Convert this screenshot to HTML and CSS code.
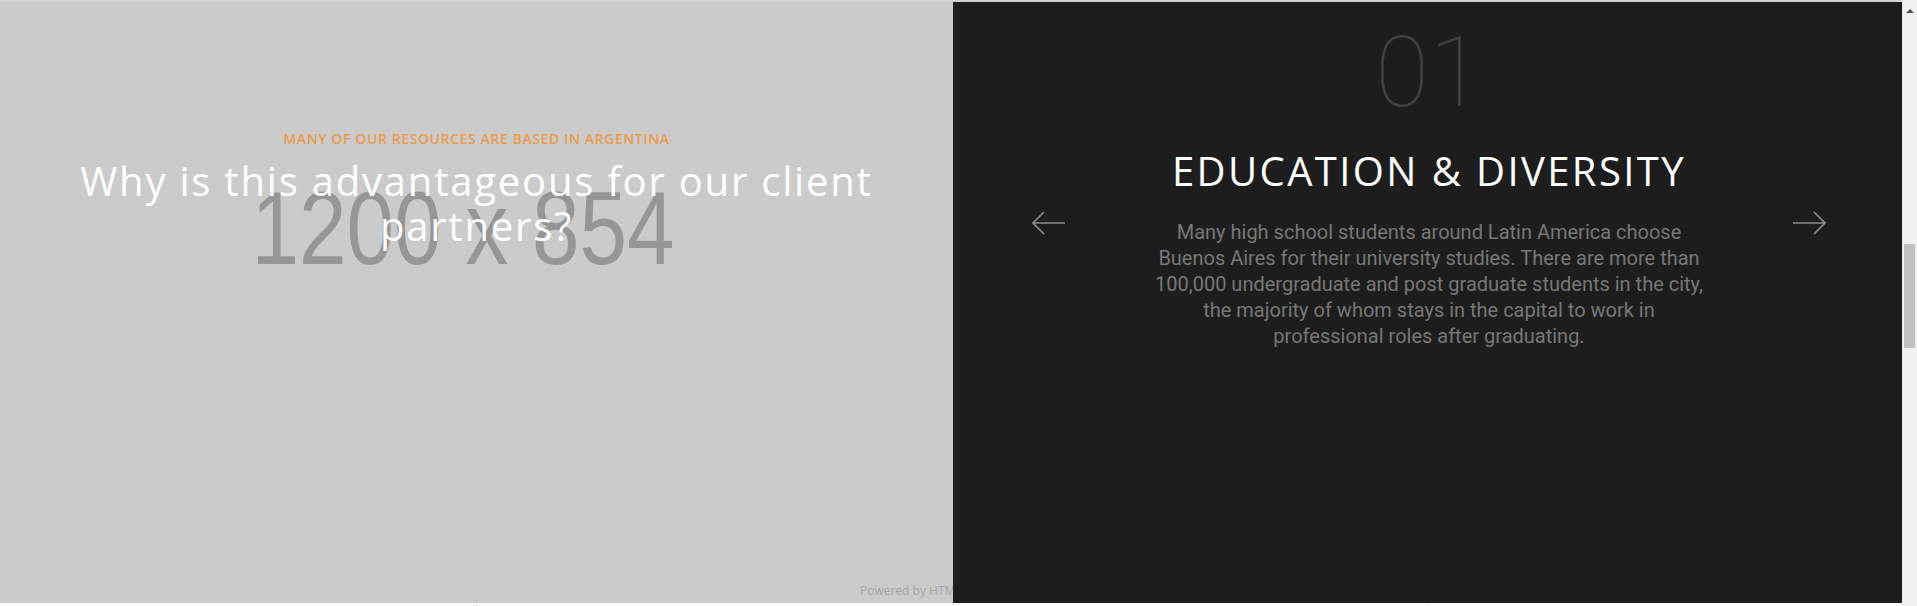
FILE: index.html
```html
<!DOCTYPE html>
<html lang="en">
<head>
<meta charset="utf-8">
<title>Why Argentina</title>
<link rel="stylesheet" href="styles.css">
</head>
<body>
<div class="page">
  <div class="main">
    <div class="topline"></div>
    <div class="panels">
      <section class="panel panel-left">
        <div class="placeholder">1200 x 854</div>
        <div class="intro">
          <p class="eyebrow">MANY OF OUR RESOURCES ARE BASED IN ARGENTINA</p>
          <h2 class="intro-title">Why is this advantageous for our client partners?</h2>
        </div>
        <div class="powered">Powered by HTML5 UP</div>
      </section>
      <section class="panel panel-right">
        <div class="slider">
          <button class="nav nav-prev" aria-label="Previous">
            <svg width="34" height="24" viewBox="0 0 34 24"><path d="M1 12 H33 M12 1 L1 12 L12 23" fill="none" stroke="#8c8c8c" stroke-width="1.6"/></svg>
          </button>
          <div class="slide">
            <div class="slide-num">01</div>
            <h3 class="slide-title">EDUCATION &amp; DIVERSITY</h3>
            <p class="slide-text">Many high school students around Latin America choose Buenos Aires for their university studies. There are more than 100,000 undergraduate and post graduate students in the city, the majority of whom stays in the capital to work in professional roles after graduating.</p>
          </div>
          <button class="nav nav-next" aria-label="Next">
            <svg width="34" height="24" viewBox="0 0 34 24"><path d="M1 12 H33 M22 1 L33 12 L22 23" fill="none" stroke="#8c8c8c" stroke-width="1.6"/></svg>
          </button>
        </div>
      </section>
    </div>
    <div class="bottomstrip">
      <span class="tick tick-left"></span>
      <span class="tick tick-right"></span>
    </div>
  </div>
  <div class="scrollbar">
    <div class="sb-up"></div>
    <div class="sb-thumb"></div>
  </div>
</div>
</body>
</html>
```
FILE: styles.css
```css
html, body {
  margin: 0;
  padding: 0;
  width: 1917px;
  height: 606px;
  overflow: hidden;
  background: #fff;
}

.page {
  display: flex;
  width: 1917px;
  height: 606px;
}

.main {
  width: 1902px;
  display: flex;
  flex-direction: column;
}

.topline {
  height: 2px;
  background: #d2d2d2;
}

.panels {
  display: flex;
  height: 601px;
}

.panel {
  position: relative;
  overflow: hidden;
}

.panel-left {
  width: 953px;
  background: #cbcbcb;
}

.panel-right {
  width: 949px;
  background: #1d1d1d;
  z-index: 1;
}

.placeholder {
  position: absolute;
  left: 0;
  top: 175px;
  width: 926px;
  text-align: center;
  font-family: "Liberation Sans", Arial, sans-serif;
  font-size: 103px;
  line-height: 1;
  color: #969696;
  transform: scaleX(0.83);
  white-space: nowrap;
}

.intro {
  position: relative;
  display: flex;
  flex-direction: column;
  align-items: center;
  padding-top: 127px;
  text-align: center;
}

.eyebrow {
  margin: 0;
  font-family: "Open Sans", "Liberation Sans", sans-serif;
  font-size: 14px;
  line-height: 20px;
  font-weight: 600;
  letter-spacing: 0.6px;
  color: #ec9b4e;
}

.intro-title {
  margin: 9px 0 0;
  max-width: 840px;
  font-family: "Open Sans", "Liberation Sans", sans-serif;
  font-weight: 400;
  font-size: 40px;
  line-height: 45px;
  letter-spacing: 1.8px;
  color: #ffffff;
}

.powered {
  position: absolute;
  left: 860px;
  top: 581px;
  font-family: "Open Sans", "Liberation Sans", sans-serif;
  font-size: 12px;
  line-height: 16px;
  color: #a5a5a5;
  white-space: nowrap;
}

.slider {
  display: flex;
  justify-content: space-between;
  align-items: flex-start;
  padding: 0 76px 0 79px;
}

.nav {
  margin-top: 209px;
  padding: 0;
  border: 0;
  background: none;
  width: 34px;
  height: 24px;
  display: block;
}

.nav svg {
  display: block;
}

.slide {
  width: 560px;
  display: flex;
  flex-direction: column;
  align-items: center;
  text-align: center;
  padding-top: 22px;
}

.slide-num {
  font-family: Roboto, "Inter", sans-serif;
  font-weight: 100;
  font-size: 98px;
  line-height: 1;
  color: #404040;
}

.slide-title {
  margin: 25px 0 0;
  font-family: "Open Sans", "Liberation Sans", sans-serif;
  font-weight: 400;
  font-size: 40px;
  line-height: 48px;
  letter-spacing: 2.4px;
  color: #ffffff;
  white-space: nowrap;
}

.slide-text {
  margin: 24px 0 0;
  width: 556px;
  font-family: Roboto, "Liberation Sans", sans-serif;
  font-size: 20px;
  line-height: 26px;
  color: #777777;
}

.bottomstrip {
  position: relative;
  height: 3px;
  background: #ffffff;
}

.tick {
  position: absolute;
  top: 0;
  width: 1px;
  height: 3px;
  background: #e4e4e4;
}

.tick-left { left: 476px; }
.tick-right { left: 1428px; }

.scrollbar {
  width: 15px;
  background: #f1f1f1;
  position: relative;
}

.sb-up {
  margin: 9px auto 0;
  width: 0;
  height: 0;
  border-left: 4px solid transparent;
  border-right: 4px solid transparent;
  border-bottom: 4px solid #505050;
}

.sb-thumb {
  margin: 231px auto 0;
  width: 11px;
  height: 104px;
  background: #c1c1c1;
}
```
